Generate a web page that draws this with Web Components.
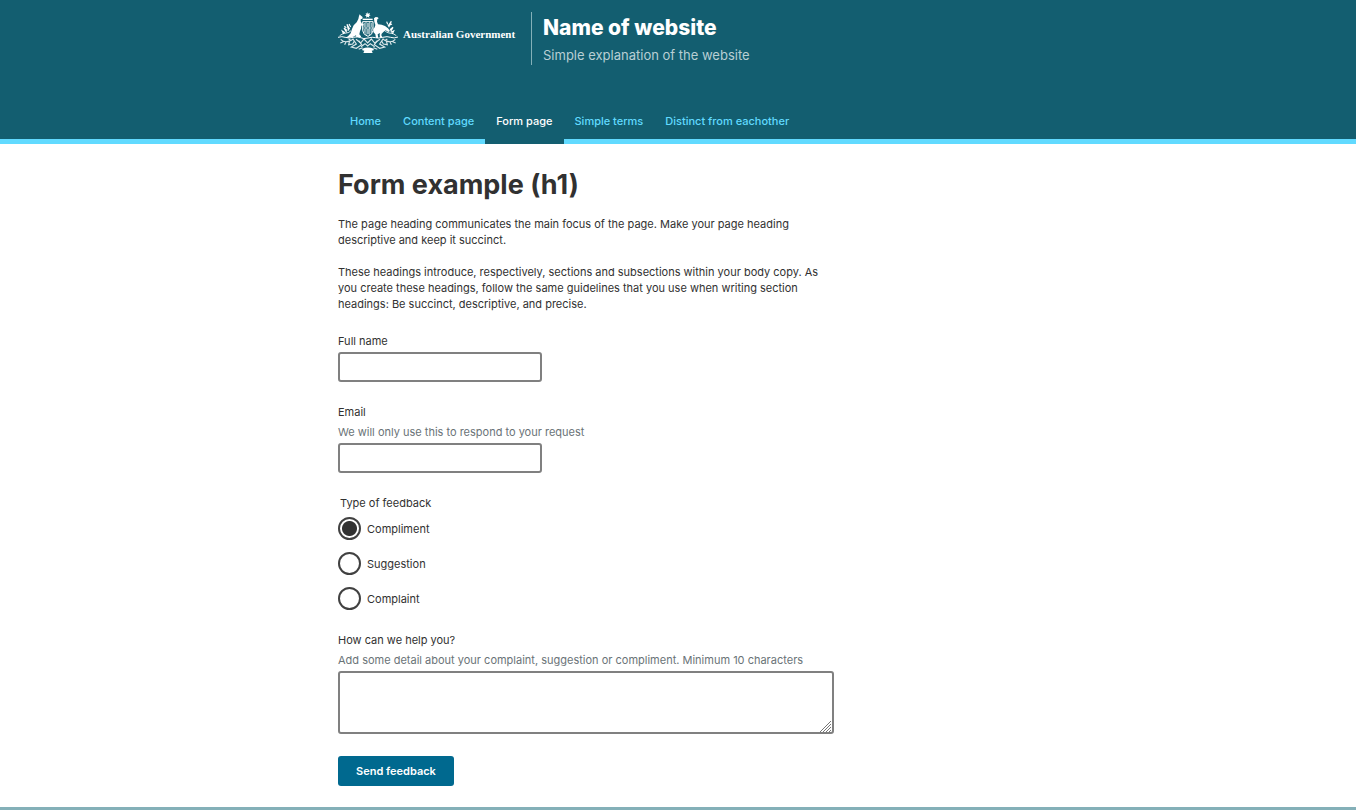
<!DOCTYPE html>
<html lang="en-AU">
<head>
<meta charset="utf-8">
<meta name="viewport" content="width=device-width, initial-scale=1">
<title>Form example</title>
<style>
  body { margin: 0; background: #fff; color: #313131; font: 11px/16px Inter, "Liberation Sans", sans-serif; }
</style>
</head>
<body>
<site-header name="Name of website" tagline="Simple explanation of the website">
  <site-nav slot="nav">
    <nav-item href="#home">Home</nav-item>
    <nav-item href="#content">Content page</nav-item>
    <nav-item href="#form" current>Form page</nav-item>
    <nav-item href="#terms">Simple terms</nav-item>
    <nav-item href="#distinct">Distinct from eachother</nav-item>
  </site-nav>
</site-header>
<page-content>
  <page-heading>Form example (h1)</page-heading>
  <body-copy>The page heading communicates the main focus of the page. Make your page heading descriptive and keep it succinct.</body-copy>
  <body-copy>These headings introduce, respectively, sections and subsections within your body copy. As you create these headings, follow the same guidelines that you use when writing section headings: Be succinct, descriptive, and precise.</body-copy>
  <feedback-form></feedback-form>
</page-content>
<site-footer></site-footer>

<script>
class BaseElement extends HTMLElement {
  connectedCallback() {
    if (this.shadowRoot) return;
    this.attachShadow({ mode: "open" }).innerHTML =
      "<style>*{box-sizing:border-box}" + this.styles() + "</style>" + this.markup();
  }
}

customElements.define("coat-of-arms", class extends BaseElement {
  styles() { return ":host{display:block;flex:none;width:60px;height:42px;color:#fff}svg{display:block;width:100%;height:100%}"; }
  markup() { return `
    <svg viewBox="0 0 180 126" fill="currentColor" stroke="none" role="img" aria-label="Commonwealth Coat of Arms">
      <path d="M89 0l2 5 5-2-2 5 4 2-5 2 1 5-5-3-5 3 1-5-5-2 5-2-2-5 5 2z"/>
      <path d="M74 20h30v4H74z"/>
      <path d="M65 7l4 4 5 4-1 5-5 2v6l4 7 5 2v3l-7 1-1 9-3 8-2 9 5 6v3H55l-1-6-8 4-14 3-12 1 10-5 8-9 4-13 5-11 9-9 5-10 2-9z"/>
      <path d="M108 19l5-4 6 1 3 3-4 3-1 7 3 8 11 1 10 4 9 7 6 8-5 3-8-5-7 5-5 5-1 5 4 7h-8l-1-8 1-6-7 4 2 11h-7l-2-11-6-7v-8l4-6 2-7-3-10z"/>
      <path d="M74 29h31v27q-2 13-15 17-14-4-16-17z" fill="none" stroke="currentColor" stroke-width="3"/>
      <path d="M84 29v40M95 29v40M74 48h31" fill="none" stroke="currentColor" stroke-width="2"/>
      <path d="M77 33h5v12h-5zm10 0h6v12h-6zm11 0h4v12h-4zM77 51h5v11h-5zm10 0h6v16h-6zm11 0h4v11h-4z" opacity=".55"/>
      <g fill="none" stroke="currentColor" stroke-width="3">
        <path d="M0 76q12-4 22 0t24 0 22 1 22 1 22-1 22-1 24 0 22-1"/>
        <path d="M5 71q10-8 20-8 8 0 14-7" stroke-width="2.5"/>
        <path d="M17 66l-4-9 8 5M26 61l-8-13 10 8M32 56l-5-19 8 15M19 43l6 4M38 45l-5-9" stroke-width="3.5"/>
        <path d="M175 71q-10-9-22-8-10-2-12-7" stroke-width="2.5"/>
        <path d="M163 66l4-9-8 4M158 58l7-12-9 7M152 46l8-18-10 14M162 36l-8 4M149 37l-3-8" stroke-width="3.5"/>
      </g>
      <g fill="none" stroke="currentColor" stroke-width="3.5" opacity=".85">
        <path d="M8 82q10 10 23 6t13-8M16 89l-9 4M24 89l-4 9M35 86l-3 12 12-2 5-9M44 80l11 16-15 9 15 4 16-11-9-12"/>
        <path d="M172 82q-10 10-23 6t-13-8M164 89l9 4M156 89l4 9M145 86l3 12-12-2-5-9M136 80l-11 16 15 9-15 4-16-11 9-12"/>
        <path d="M54 82l14 11 10-12 11 12 11-12 10 12 16-11M69 104l12-9 8 7 8-7 13 9M62 112l12-5M118 112l-12-5M32 81l6 4M148 81l-6 4"/>
      </g>
      <path d="M73 110q17-7 34 0v5l-6 1 3 7H76l3-7-6-1z"/>
    </svg>`; }
});

customElements.define("site-header", class extends BaseElement {
  styles() { return `
    :host{display:block;background:#135e70;color:#fff}
    .wrap{max-width:680px;margin:0 auto;padding-top:12px}
    .brand{display:flex;align-items:flex-start;height:88px;color:inherit;text-decoration:none}
    .gov{display:flex;align-items:center;gap:5px;flex:0 0 193px}
    .gov span{font:bold 11px/16px "Liberation Serif",serif;padding-top:2px}
    .site{border-left:1px solid #84b0b8;padding:2px 0 0 11px;height:53px}
    .name{display:block;font-weight:800;font-size:21px;line-height:28px}
    .tag{display:block;color:#b8cfd4;font-size:13px;line-height:26px}`; }
  markup() { return `<header><div class="wrap"><a class="brand" href="#home">
    <span class="gov"><coat-of-arms></coat-of-arms><span>Australian Government</span></span>
    <span class="site"><span class="name">${this.getAttribute("name")}</span><span class="tag">${this.getAttribute("tagline")}</span></span>
    </a></div><slot name="nav"></slot></header>`; }
});

customElements.define("site-nav", class extends BaseElement {
  styles() { return `
    :host{display:block;background:linear-gradient(#61daff,#61daff) bottom/100% 5px no-repeat}
    nav{display:flex;max-width:680px;margin:0 auto;padding-left:1px;box-sizing:border-box}`; }
  markup() { return `<nav aria-label="main"><slot></slot></nav>`; }
});

customElements.define("nav-item", class extends BaseElement {
  styles() { return `
    :host{display:block}
    a{display:block;padding:13px 11px 15px;color:#61daff;font-weight:500;text-decoration:none}
    :host([current]) a{background:#135e70;color:#fff}`; }
  markup() { return `<a href="${this.getAttribute("href")}"${this.hasAttribute("current") ? ' aria-current="page"' : ""}><slot></slot></a>`; }
});

customElements.define("page-content", class extends BaseElement {
  styles() { return ":host{display:block}main{max-width:680px;margin:0 auto;padding:25px 0 21px}"; }
  markup() { return "<main><slot></slot></main>"; }
});

customElements.define("page-heading", class extends BaseElement {
  styles() { return ":host{display:block}h1{margin:0 0 15px;font-size:27px;line-height:32px;font-weight:700}"; }
  markup() { return "<h1><slot></slot></h1>"; }
});

customElements.define("body-copy", class extends BaseElement {
  styles() { return ":host{display:block;max-width:495px}p{margin:0 0 16px}"; }
  markup() { return "<p><slot></slot></p>"; }
});

customElements.define("text-field", class extends BaseElement {
  styles() { return `
    :host{display:block}
    label,.hint{display:block}
    .hint{color:#6a7377;padding-top:4px}
    input,textarea{display:block;margin:3px 0 0;padding:4px 8px;border:2px solid #808080;border-radius:3px;background:#fff;color:inherit;font:inherit}
    input{width:204px;height:30px}
    textarea{width:100%;max-width:496px;height:63px;resize:vertical}
    textarea::-webkit-resizer{background:url("data:image/svg+xml,%3Csvg xmlns='http://www.w3.org/2000/svg' width='12' height='11'%3E%3Cpath d='M0 11L11 0M3 11l8-8M6 11l5-5M9 11l2-2' stroke='%23777' fill='none'/%3E%3C/svg%3E") right bottom no-repeat}`; }
  markup() {
    const hint = this.getAttribute("hint");
    const described = hint ? ' aria-describedby="hint"' : "";
    const control = this.hasAttribute("multiline")
      ? `<textarea id="control"${described}></textarea>`
      : `<input id="control" type="${this.getAttribute("type") || "text"}"${described}>`;
    return `<label for="control">${this.getAttribute("label")}</label>${hint ? `<span class="hint" id="hint">${hint}</span>` : ""}${control}`;
  }
});

customElements.define("feedback-type", class extends BaseElement {
  styles() { return `
    :host{display:block}
    fieldset{margin:0;padding:0;border:0;display:grid;gap:12px}
    legend{padding:0 2px;margin-bottom:6px}
    label{display:flex;align-items:center;gap:6px}
    input{appearance:none;flex:none;width:23px;height:23px;margin:0;border:2px solid #414141;border-radius:50%;background:#fff}
    input:checked{background:radial-gradient(circle,#313131 7px,#fff 8px)}`; }
  markup() {
    const options = ["Compliment", "Suggestion", "Complaint"];
    return `<fieldset><legend>Type of feedback</legend>${options.map((o, i) =>
      `<label><input type="radio" name="type" value="${o}"${i ? "" : " checked"}>${o}</label>`).join("")}</fieldset>`;
  }
});

customElements.define("feedback-form", class extends BaseElement {
  styles() { return `
    :host{display:block}
    form{display:grid;gap:22px;padding-top:5px}
    button{justify-self:start;height:30px;padding:0 18px;border:0;border-radius:3px;background:#00698f;color:#fff;font:600 11px/16px Inter,"Liberation Sans",sans-serif}`; }
  markup() { return `<form>
    <text-field label="Full name"></text-field>
    <text-field label="Email" type="email" hint="We will only use this to respond to your request"></text-field>
    <feedback-type></feedback-type>
    <text-field label="How can we help you?" multiline hint="Add some detail about your complaint, suggestion or compliment. Minimum 10 characters"></text-field>
    <button type="submit">Send feedback</button></form>`; }
});

customElements.define("site-footer", class extends BaseElement {
  styles() { return ":host{display:block}footer{border-top:3px solid #84b0b8}"; }
  markup() { return "<footer></footer>"; }
});
</script>
</body>
</html>
